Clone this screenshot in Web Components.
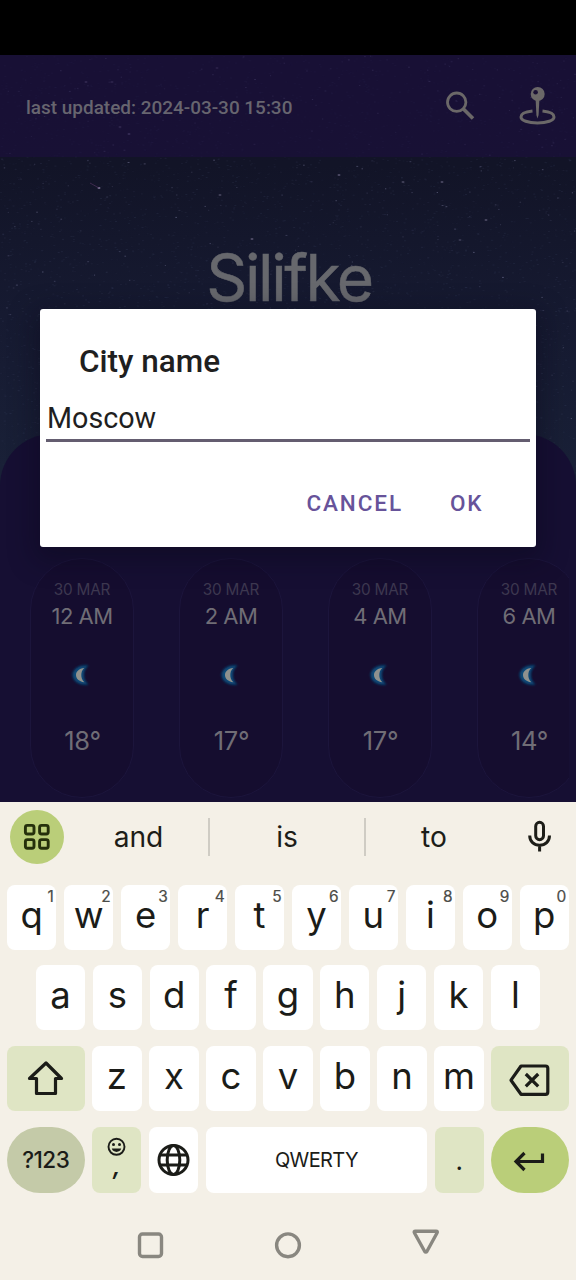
<!DOCTYPE html>
<html lang="en">
<head>
<meta charset="utf-8">
<title>Weather</title>
<style>
html,body{margin:0;padding:0;background:#000}
body{width:576px;height:1280px;overflow:hidden}
</style>
</head>
<body>
<phone-screen></phone-screen>
<script>
const define = (name, html, setup) => customElements.define(name, class extends HTMLElement {
  connectedCallback() {
    if (this.shadowRoot) return;
    const root = this.attachShadow({ mode: 'open' });
    const t = document.createElement('template');
    t.innerHTML = typeof html === 'function' ? html(this) : html;
    root.append(t.content.cloneNode(true));
    if (setup) setup(root, this);
  }
});

define('star-field', `<style>
  :host{display:block;position:absolute;left:0;top:0;width:576px;height:420px;overflow:hidden}
  svg{display:block;width:100%;height:100%}
</style><svg viewBox="0 0 576 420"><g id="s"></g></svg>`, root => {
  let seed = 9173;
  const rnd = () => (seed = (seed * 16807) % 2147483647) / 2147483647;
  let out = '';
  for (let i = 0; i < 5000; i++) {
    const x = (rnd() * 576).toFixed(1), y = (rnd() * 420).toFixed(1);
    const o = (0.03 + rnd() * 0.07).toFixed(2);
    out += `<rect x="${x}" y="${y}" width="2" height="1" fill="#7f8cb8" opacity="${o}"/>`;
  }
  for (let i = 0; i < 260; i++) {
    const x = (rnd() * 576).toFixed(1), y = (rnd() * Math.sqrt(rnd()) * 400).toFixed(1);
    const o = (0.14 + rnd() * 0.3).toFixed(2);
    out += `<rect x="${x}" y="${y}" width="${(1 + rnd()).toFixed(1)}" height="1" fill="#8f8fb4" opacity="${o}"/>`;
  }
  [[99,133,.8],[86,27,.5],[112,27,.4],[129,79,.6],[120,72,.45],[339,120,.5],[442,127,.45],[252,184,.5],[217,13,.35],[486,165,.45],[220,140,.4],[403,127,.4],[460,185,.3]].forEach(([x, y, o]) => {
    out += `<ellipse cx="${x}" cy="${y}" rx="1.5" ry=".9" fill="#8c84a6" opacity="${o}"/>`;
  });
  out += '<path d="M90 128L99 133" stroke="#5a3868" stroke-width="1" opacity=".6"/>';
  root.getElementById('s').innerHTML = out;
});

define('app-header', `<style>
  :host{display:flex;position:relative;height:102px;box-sizing:border-box;align-items:center;padding:0 20px 0 26px;background:rgba(28,15,64,.6);
    font:500 18.950px/24px Roboto,sans-serif;color:#67656f}
  span{flex:1;padding-top:3px;white-space:nowrap}
  .s{margin-right:42px} svg{display:block}
</style><span><slot></slot></span>
<svg class="s" width="32" height="32" viewBox="0 0 32 32" fill="none" stroke="#6b6868"><circle cx="12.700" cy="12.200" r="9.200" stroke-width="2.800"/><path d="M19.200 18.700L29 28.500" stroke-width="3.600"/></svg>
<svg width="38" height="42" viewBox="0 0 38 42" fill="none" stroke="#6b6868"><path d="M14.500 26C7.500 26.700 3 29 3 31.900C3 35.400 10 38 19.500 38S36 35.400 36 31.900C36 29 31.500 26.700 24.500 26" stroke-width="3"/><path d="M17.600 14H21.400L20.600 30L19.500 33.500L18.400 30Z" fill="#6b6868" stroke="none"/><circle cx="19.700" cy="9" r="7" fill="#6b6868" stroke="none"/><circle cx="17.600" cy="7.200" r="2.300" fill="#1a1135" stroke="none"/></svg>`);

define('hour-card', el => `<style>
  :host{display:flex;flex:none;flex-direction:column;align-items:center;box-sizing:border-box;width:104px;height:240px;border:1px solid #1c153c;border-radius:52px;background:#150d2f;
    font-family:Inter,sans-serif;white-space:nowrap;color:#706d76}
  .d{font-size:15.300px;line-height:20px;margin-top:21px;color:#3d3850;letter-spacing:-.2px}
  .h{font-size:22px;line-height:28px;margin-top:2px;letter-spacing:-.5px}
  svg{display:block;margin-top:31px}
  .t{font-size:25.500px;line-height:32px;margin-top:36px;letter-spacing:-.3px;padding-left:1px}
</style><div class="d">30 MAR</div><div class="h"><slot></slot></div>
<svg width="28" height="28" viewBox="0 0 28 28"><defs><filter id="b" x="-30%" y="-30%" width="160%" height="160%"><feGaussianBlur stdDeviation=".8"/></filter><filter id="c"><feGaussianBlur stdDeviation=".45"/></filter></defs>
<path d="M20.500 4.500C11 3 4.500 8.500 4.500 14S11 25 20.500 23.500C16.500 20 16 17 16 14S16.500 8 20.500 4.500Z" fill="#084a78" filter="url(#b)"/>
<path d="M16.300 7C11 7.500 8 10.500 8 14S11 20.500 16.300 21.300C13.600 18.500 13.300 16 13.300 14S13.800 9.300 16.300 7Z" fill="#8f918e" filter="url(#c)"/></svg>
<div class="t">${el.getAttribute('temp')}</div>`);

define('hour-panel', `<style>
  :host{display:block;position:relative;height:368px;box-sizing:border-box;background:#160f33;border-radius:52px 52px 0 0;overflow:hidden}
  div{display:flex;gap:45px;width:569px;box-sizing:border-box;overflow:hidden;padding:124px 0 0 30px}
</style><div><slot></slot></div>`);

define('weather-app', `<style>
  :host{display:flex;flex-direction:column;position:relative;height:747px;background:linear-gradient(#121227 0,#121427 110px,#161a31 260px,#192037 410px,#192037);overflow:hidden}
  h1{position:relative;margin:0;flex:1;padding-top:80px;text-align:center;font:400 64px/81px Inter,sans-serif;letter-spacing:-2.400px;color:#67686d;padding-left:2px;-webkit-text-stroke:.5px #67686d}
</style><star-field></star-field>
<app-header>last updated: 2024-03-30 15:30</app-header>
<h1>Silifke</h1>
<hour-panel><hour-card temp="18°">12 AM</hour-card><hour-card temp="17°">2 AM</hour-card><hour-card temp="17°">4 AM</hour-card><hour-card temp="14°">6 AM</hour-card></hour-panel>`);

define('city-dialog', `<style>
  :host{display:flex;flex-direction:column;position:absolute;left:40px;top:309px;width:496px;height:238px;box-sizing:border-box;background:#fff;border-radius:3px;
    box-shadow:0 8px 26px 6px rgba(10,8,26,.4);font-family:Roboto,sans-serif;color:#1f1f1f}
  h2{margin:32px 0 0 39px;font-size:31.500px;line-height:41px;font-weight:500}
  .f{margin:14px 6px 0;height:43px;border-bottom:3px solid #645d70;font-size:28.700px;line-height:44px;padding-left:1px}
  .a{display:flex;justify-content:flex-end;gap:47px;margin:45px 52.500px 0;font-size:22.500px;line-height:32px;font-weight:500;letter-spacing:1.900px;color:#67539a}
</style><h2>City name</h2><div class="f">Moscow</div><div class="a"><span>CANCEL</span><span>OK</span></div>`);

define('suggestion-bar', `<style>
  :host{display:flex;align-items:center;height:70px;box-sizing:border-box;padding-left:10px;font:400 28.200px/36px Inter,sans-serif;color:#1d1d18}
  .m{width:54px;height:54px;border-radius:50%;background:#bace79;display:grid;place-items:center}
  .w{text-align:center} .v{width:2px;height:38px;background:#cfccc4}
</style><div class="m"><svg width="28" height="28" viewBox="0 0 28 28" fill="none" stroke="#25300b" stroke-width="2.900"><rect x="2.400" y="2.400" width="8.600" height="8.600" rx="2"/><rect x="16.600" y="2.400" width="8.600" height="8.600" rx="2"/><rect x="2.400" y="16.600" width="8.600" height="8.600" rx="2"/><rect x="16.600" y="16.600" width="8.600" height="8.600" rx="2"/></svg></div>
<div class="w" style="width:144px;text-indent:5px">and</div><div class="v"></div><div class="w" style="width:154px">is</div><div class="v"></div><div class="w" style="width:136px">to</div>
<svg style="margin:-3px 0 0 25px" width="26" height="34" viewBox="0 0 26 34" fill="none" stroke="#1d1d18" stroke-width="3"><rect x="8.700" y="3.300" width="7.800" height="17.400" rx="3.900"/><path d="M2.700 16.500C2.700 22.500 7 26.300 12.600 26.300S22.500 22.500 22.500 16.500M12.600 26V32.500"/></svg>`);

define('key-cap', el => `<style>
  :host{display:block;position:relative;flex:none;width:49.300px;height:65px;border-radius:8px;background:#fff;text-align:center;font:400 36.500px/61px Inter,sans-serif;color:#1b1c18}
  .c{letter-spacing:0}
  :host([hint=\\32]){letter-spacing:-1px;text-indent:-1px}
  sup{position:absolute;right:2.500px;top:2px;font-size:15.500px;line-height:20px;letter-spacing:0;text-indent:0;color:#4b4c48;-webkit-text-stroke:.2px #4b4c48}
  :host([kind=soft]){background:#dfe5c4}
  :host([kind=wide]){background:#dfe5c4;width:77.500px}
  :host([kind=mode]){background:#c4caa8;width:77.500px;border-radius:34px;font-size:22.500px;font-weight:500;line-height:66px;letter-spacing:-.5px}
  :host([kind=enter]){background:#bace79;width:77.500px;border-radius:34px}
  :host([kind=space]){width:220.800px;font-size:20px;line-height:67px;letter-spacing:-.6px}
  :host([tall]){height:66.500px}
  ::slotted(svg){display:block;margin:0 auto}
</style><slot></slot>${el.hasAttribute('hint') ? `<sup>${el.getAttribute('hint')}</sup>` : ''}`);

define('key-row', `<style>
  :host{display:flex;justify-content:space-between;padding:0 7px;margin-bottom:15.600px}
  :host([inset]){padding:0 35.800px}
</style><slot></slot>`);

define('nav-bar', `<style>
  :host{display:block;margin-top:18.500px} svg{display:block}
</style><svg width="576" height="68" viewBox="0 0 576 68" fill="none" stroke="#898780" stroke-width="3.400"><rect x="139.500" y="22" width="22" height="22.500" rx="3"/><circle cx="288" cy="33.300" r="11.400"/><path d="M415.500 19.200H436Q438 19.200 437 21L427 39.200Q425.800 41 424.600 39.200L414.500 21Q413.500 19.200 415.500 19.200Z"/></svg>`);

const keys = (s, hints) => [...s].map((c, i) => `<key-cap${hints ? ` hint="${hints[i]}"` : ''}>${c}</key-cap>`).join('');
define('soft-keyboard', `<style>
  :host{display:block;height:478px;background:#f4f0e7;box-sizing:border-box}
  suggestion-bar{margin-bottom:12.800px}
  .e{display:grid;grid-template-rows:39px 20px;font-size:24px;font-weight:600;line-height:1px}
</style><suggestion-bar></suggestion-bar>
<key-row>${keys('qwertyuiop', '1234567890')}</key-row>
<key-row inset>${keys('asdfghjkl')}</key-row>
<key-row><key-cap kind="wide"><svg width="78" height="65" viewBox="0 0 78 65" fill="none" stroke="#1b1c18" stroke-width="3.200" stroke-linejoin="round"><path d="M39 17L54.500 32.500H48.500V47.500H29.500V32.500H22.500Z"/></svg></key-cap>${keys('zxcvbnm')}<key-cap kind="wide"><svg width="78" height="65" viewBox="0 0 78 65" fill="none" stroke="#1b1c18" stroke-width="3.200" stroke-linejoin="round"><path d="M30 20H54.500Q56.800 20 56.800 22.300V46Q56.800 48.300 54.500 48.300H30L20 34.200ZM34.800 28L47.200 40.400M47.200 28L34.800 40.400"/></svg></key-cap></key-row>
<key-row><key-cap kind="mode" tall>?123</key-cap><key-cap kind="soft" tall><div class="e"><svg width="49" height="39" viewBox="0 0 49 39" fill="none" stroke="#1b1c18" stroke-width="1.900" style="display:block"><circle cx="24.500" cy="19.800" r="8"/><circle cx="21.500" cy="17.500" r="1.500" fill="#1b1c18" stroke="none"/><circle cx="27.500" cy="17.500" r="1.500" fill="#1b1c18" stroke="none"/><path d="M19.800 21.600H29.200C28.200 26 20.800 26 19.800 21.600Z" fill="#1b1c18" stroke="none"/></svg><i>,</i></div></key-cap><key-cap tall><svg width="49" height="66" viewBox="0 0 49 66" fill="none" stroke="#1b1c18" stroke-width="3"><circle cx="24.500" cy="33" r="14.500"/><ellipse cx="24.500" cy="33" rx="6.300" ry="14.500"/><path d="M11 28H38M11 38H38"/></svg></key-cap><key-cap kind="space" tall>QWERTY</key-cap><key-cap kind="soft" tall><span style="font-size:26px;line-height:66px">.</span></key-cap><key-cap kind="enter" tall><svg width="78" height="66" viewBox="0 0 78 66" fill="none" stroke="#1b1c18" stroke-width="3.200"><path d="M51.500 26.500V34.500H25.500M33.500 26L25 34.500L33.500 43"/></svg></key-cap></key-row>
<nav-bar></nav-bar>`);

define('phone-screen', `<style>
  :host{display:block;position:relative;width:576px;height:1280px;overflow:hidden;background:#000}
  .b{height:55px}
</style><div class="b"></div><weather-app></weather-app><soft-keyboard></soft-keyboard><city-dialog></city-dialog>`);
</script>
</body>
</html>
